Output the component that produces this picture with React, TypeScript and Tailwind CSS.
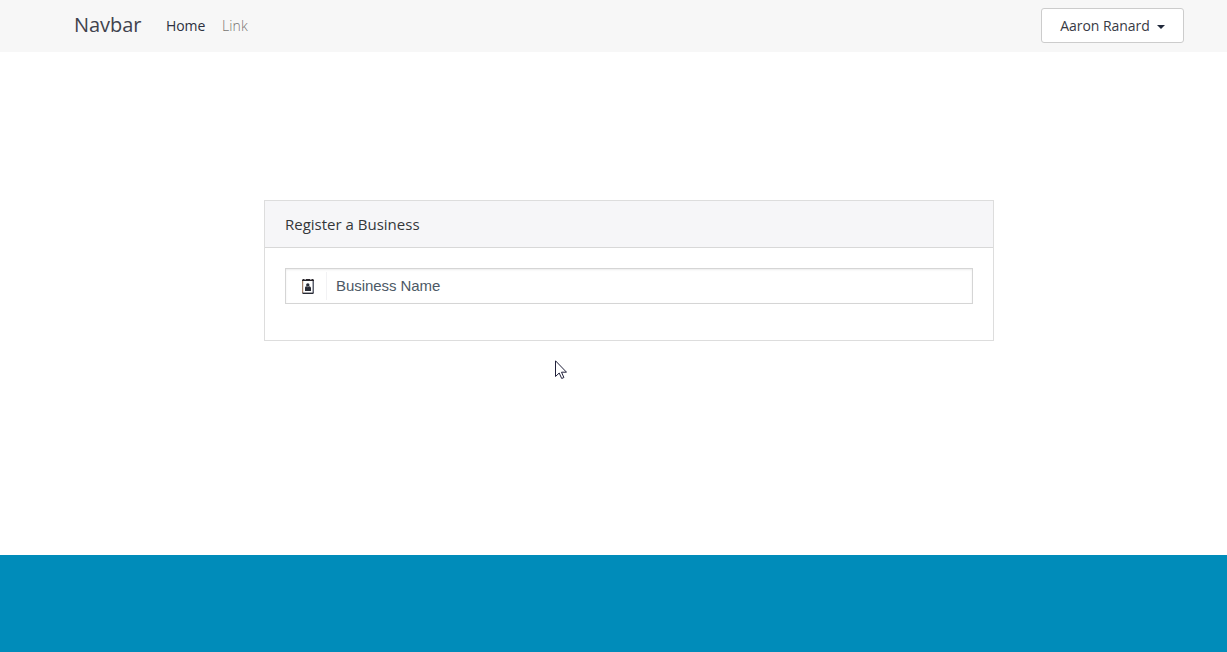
function ContactIcon() {
  return (
    <svg width="12" height="15" viewBox="0 0 12 15" aria-hidden="true">
      <rect x="0.5" y="1.5" width="11" height="13" rx="0.8" fill="#fff" />
      <path d="M.7 1v13" stroke="#8a6347" strokeWidth="1" />
      <path d="M11.2 1v13" stroke="#34394a" strokeWidth="1.2" />
      <path d="M.5 14.3h11" stroke="#292b35" strokeWidth="1.4" />
      <path d="M1 0h1.5v.7h1.3V0h4.4v.7h1.3V0H11l1 1v1H0V1z" fill="#29252b" />
      <circle cx="5.8" cy="6" r="1.7" fill="#292b35" />
      <path d="M4.4 7.2 5.8 8.2l1.4-1c1.2.2 1.8 1 1.8 2V12H3V9.2c0-1 .2-1.8 1.4-2z" fill="#292b35" />
    </svg>
  );
}

function Pointer() {
  return (
    <svg className="absolute left-[555px] top-[360px]" width="12" height="19" viewBox="0 0 12 19" aria-hidden="true">
      <path d="M.5.8v15.7l3.7-3.5 2.5 5.5 2.2-1-2.4-5.3h5z" fill="#fff" stroke="#20203a" strokeWidth="1" />
    </svg>
  );
}

export default function App() {
  return (
    <div className="relative flex h-[652px] w-full flex-col overflow-hidden bg-white font-['Open_Sans',sans-serif] text-[#292b2c]">
      <nav className="flex h-[52px] shrink-0 items-center bg-[#f7f7f7] pr-[43px] pl-[74px]">
        <a href="#" className="mr-6 h-[30px] w-[68px] whitespace-nowrap text-[20px] leading-[28px] font-normal tracking-[-0.03px] text-[#40424d]">Navbar</a>
        <a href="#" className="mr-4 w-10 text-[14px] leading-[20px] font-normal tracking-[-0.1px] text-[#2c3040]">Home</a>
        <a href="#" className="text-[14px] leading-[20px] font-light tracking-[0.1px] text-[#777572]">Link</a>
        <button type="button" className="mb-px ml-auto flex h-[35px] w-[143px] items-center rounded-[3px] border border-[#ccc] bg-white pl-[17.5px] text-[14px] font-normal text-[#383a44]">
          <span className="w-[91px] whitespace-nowrap tracking-[-0.03px]">Aaron Ranard</span>
          <svg className="mt-0.5 ml-1.5" width="8" height="4" viewBox="0 0 8 4" aria-hidden="true"><path d="M0 0h8L4 4z" fill="#20293a" /></svg>
        </button>
      </nav>
      <main className="flex flex-1 items-start pt-[148px] pl-[264px]">
        <section className="h-[141px] w-[730px] border border-[#ddd]">
          <h1 className="flex h-[47px] items-center border-b border-[#d8d8d8] bg-[#f6f6f8] px-5 text-[15px] font-normal text-[#34363a]">
            <span>Register a Business</span>
          </h1>
          <div className="px-5 pt-5">
            <label className="flex h-9 items-center border border-[#d5d5d5] bg-white shadow-[inset_0_1px_2px_rgba(0,0,0,0.08)]">
              <span className="flex h-7 w-[41px] items-center border-r border-[#f2f2f4] pt-px pl-4"><ContactIcon /></span>
              <input aria-label="Business Name" placeholder="Business Name" className="min-w-0 flex-1 bg-transparent px-[9px] pb-px font-['Liberation_Sans',Arial,sans-serif] text-[15px] leading-[20px] tracking-[-0.06px] text-[#4b5563] outline-none placeholder:text-[#4d5966]" />
            </label>
          </div>
        </section>
      </main>
      <footer className="h-[97px] shrink-0 bg-[#008cba]" />
      <Pointer />
    </div>
  );
}
